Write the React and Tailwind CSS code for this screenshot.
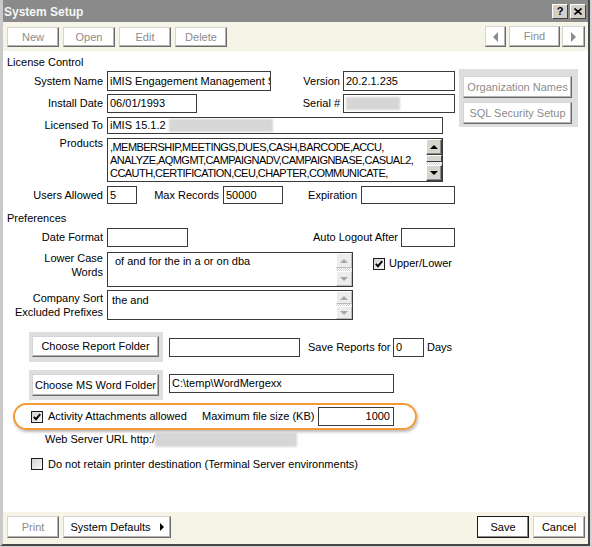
import React from "react";

function Btn({ className = "", disabled = false, def = false, children }) {
  const border = def
    ? "border border-[#1a1a1a] shadow-[inset_-1px_-1px_0_#8a8a8a]"
    : "border border-t-[#d4d4d4] border-l-[#d4d4d4] border-r-[#6a6a6a] border-b-[#6a6a6a] shadow-[inset_-1px_-1px_0_#b4b4b4]";
  const color = disabled ? "text-[#8c8c8c]" : "text-black";
  return (
    <div className={`shrink-0 flex items-center justify-center bg-white whitespace-nowrap ${border} ${color} ${className}`}>
      {children}
    </div>
  );
}

function Label({ children, className = "" }) {
  return <div className={`w-[100px] mr-[4px] shrink-0 text-right whitespace-nowrap ${className}`}>{children}</div>;
}

function Field({ className = "", children }) {
  return (
    <div className={`shrink-0 flex items-center border border-[#3a3a3a] bg-white overflow-hidden whitespace-nowrap pl-[2px] ${className}`}>
      {children}
    </div>
  );
}

function Blur({ className = "" }) {
  return <div className={`bg-[#d6d6d6] blur-[1px] shrink-0 ${className}`} />;
}

function ScrollBtn({ up, disabled, className = "" }) {
  const box = disabled
    ? "bg-[#ececec] border border-t-white border-l-white border-r-[#bcbcbc] border-b-[#bcbcbc]"
    : "bg-[#d8d5ce] border border-t-white border-l-white border-r-[#404040] border-b-[#404040] shadow-[inset_-1px_-1px_0_#8c8c8c]";
  const arrow = up
    ? disabled
      ? "border-l-[4px] border-r-[4px] border-b-[4px] border-l-transparent border-r-transparent border-b-[#a8a8a8]"
      : "border-l-[4px] border-r-[4px] border-b-[4px] border-l-transparent border-r-transparent border-b-black"
    : disabled
      ? "border-l-[4px] border-r-[4px] border-t-[4px] border-l-transparent border-r-transparent border-t-[#a8a8a8]"
      : "border-l-[4px] border-r-[4px] border-t-[4px] border-l-transparent border-r-transparent border-t-black";
  return (
    <div className={`shrink-0 flex items-center justify-center ${box} ${className}`}>
      <div className={`w-0 h-0 ${arrow}`} />
    </div>
  );
}

function Checker({ className = "" }) {
  return (
    <div className={`flex-1 bg-[repeating-conic-gradient(#cfcfcf_0_25%,#ffffff_0_50%)] bg-[length:2px_2px] ${className}`} />
  );
}

function Check({ checked }) {
  return (
    <div className="shrink-0 w-[12px] h-[12px] border border-[#1c1c1c] bg-gradient-to-br from-[#d2d2d2] to-[#f8f8f8] flex items-center justify-center">
      {checked && (
        <svg width="8" height="8" viewBox="0 0 8 8">
          <path d="M0.8 3.8 L3 6.2 L7.2 1.2" stroke="#000" strokeWidth="1.9" fill="none" />
        </svg>
      )}
    </div>
  );
}

export default function App() {
  return (
    <div className="w-[592px] h-[547px] bg-[#d2d2d2] overflow-hidden font-['Liberation_Sans',Arial,sans-serif] text-[11px] leading-[13px] text-black">
      <div className="w-[590px] h-[546px] border-l-[3px] border-l-[#c9c9c9] border-r-2 border-r-[#474747] border-b-2 border-b-[#474747] flex flex-col bg-white">
        {/* Title bar */}
        <div className="h-[22px] shrink-0 bg-[#8a8a8a] flex items-center pl-[1px] pr-[2px]">
          <div className="font-bold text-[12px] leading-[14px] text-[#f6f6f6] pt-[1px]">System Setup</div>
          <div className="ml-auto flex gap-[2px]">
            <div className="w-[16px] h-[15px] bg-[#d4d0c8] border border-t-white border-l-white border-r-[#404040] border-b-[#404040] flex items-center justify-center font-bold text-[11px] leading-[11px]">?</div>
            <div className="w-[16px] h-[15px] bg-[#d4d0c8] border border-t-white border-l-white border-r-[#404040] border-b-[#404040] flex items-center justify-center">
              <svg width="8" height="7" viewBox="0 0 8 7">
                <path d="M0.5 0.5 L7.5 6.5 M7.5 0.5 L0.5 6.5" stroke="#000" strokeWidth="1.6" />
              </svg>
            </div>
          </div>
        </div>

        {/* Toolbar */}
        <div className="h-[29px] shrink-0 bg-[#f6f3e7] flex items-start pt-[5px] pl-[4px] pr-[3px]">
          <div className="flex gap-[4px]">
            <Btn disabled className="w-[52px] h-[20px]">New</Btn>
            <Btn disabled className="w-[52px] h-[20px]">Open</Btn>
            <Btn disabled className="w-[52px] h-[20px]">Edit</Btn>
            <Btn disabled className="w-[52px] h-[20px]">Delete</Btn>
          </div>
          <div className="ml-auto flex">
            <Btn disabled className="w-[21px] h-[21px] -mt-[1px]">
              <div className="w-0 h-0 border-t-[5px] border-b-[5px] border-r-[5px] border-t-transparent border-b-transparent border-r-[#8c8c8c]" />
            </Btn>
            <Btn disabled className="ml-[3px] w-[51px] h-[21px] -mt-[1px]">Find</Btn>
            <Btn disabled className="ml-[2px] w-[23px] h-[21px] -mt-[1px]">
              <div className="w-0 h-0 border-t-[5px] border-b-[5px] border-l-[5px] border-t-transparent border-b-transparent border-l-[#8c8c8c]" />
            </Btn>
          </div>
        </div>

        {/* Body */}
        <div className="flex-1 flex flex-col">
          <div className="mt-[5px] ml-[4px] h-[13px]">License Control</div>

          <div className="flex">
            <div className="flex flex-col pt-[2px]">
              <div className="flex items-center h-[20px]">
                <Label>System Name</Label>
                <Field className="w-[164px] h-[20px]">iMIS Engagement Management System</Field>
                <div className="w-[69px] text-right shrink-0">Version</div>
                <Field className="ml-[3px] w-[112px] h-[20px]">20.2.1.235</Field>
              </div>
              <div className="flex items-center h-[19px] mt-[3px]">
                <Label>Install Date</Label>
                <Field className="w-[90px] h-[19px]">06/01/1993</Field>
                <div className="w-[143px] text-right shrink-0">Serial #</div>
                <Field className="ml-[3px] w-[112px] h-[19px]">
                  <Blur className="w-[54px] h-[13px]" />
                </Field>
              </div>
              <div className="flex items-center h-[17px] mt-[4px]">
                <Label>Licensed To</Label>
                <Field className="w-[336px] h-[17px]">
                  <span>iMIS 15.1.2</span>
                  <Blur className="ml-[3px] w-[104px] h-[13px]" />
                </Field>
              </div>
              <div className="flex items-start h-[44px] mt-[4px]">
                <Label className="-mt-[1px]">Products</Label>
                <div className="shrink-0 w-[336px] h-[44px] border border-[#3a3a3a] bg-white flex">
                  <div className="flex-1 overflow-hidden pl-[2px] pt-[2px] whitespace-nowrap tracking-[-0.55px]">
                    <div>,MEMBERSHIP,MEETINGS,DUES,CASH,BARCODE,ACCU,</div>
                    <div>ANALYZE,AQMGMT,CAMPAIGNADV,CAMPAIGNBASE,CASUAL2,</div>
                    <div>CCAUTH,CERTIFICATION,CEU,CHAPTER,COMMUNICATE,</div>
                  </div>
                  <div className="w-[16px] flex flex-col">
                    <ScrollBtn up className="h-[16px]" />
                    <div className="shrink-0 h-[7px] bg-[#d8d5ce] border border-t-white border-l-white border-r-[#404040] border-b-[#404040]" />
                    <Checker />
                    <ScrollBtn className="h-[16px]" />
                  </div>
                </div>
              </div>
              <div className="flex items-center h-[18px] mt-[4px]">
                <Label>Users Allowed</Label>
                <Field className="w-[30px] h-[18px]">5</Field>
                <div className="w-[82px] text-right shrink-0">Max Records</div>
                <Field className="ml-[4px] w-[60px] h-[18px]">50000</Field>
                <div className="w-[74px] text-right shrink-0">Expiration</div>
                <Field className="ml-[4px] w-[94px] h-[18px]"></Field>
              </div>
            </div>

            <div className="ml-[4px] w-[119px] h-[58px] bg-[#dedede] pt-[7px] pl-[4px] flex flex-col gap-[4px]">
              <Btn disabled className="w-[109px] h-[22px]">Organization Names</Btn>
              <Btn disabled className="w-[109px] h-[22px]">SQL Security Setup</Btn>
            </div>
          </div>

          <div className="mt-[8px] ml-[4px] h-[13px]">Preferences</div>

          <div className="flex items-center h-[19px] mt-[3px]">
            <Label>Date Format</Label>
            <Field className="w-[81px] h-[19px]"></Field>
            <div className="w-[210px] text-right shrink-0">Auto Logout After</div>
            <Field className="ml-[3px] w-[54px] h-[19px]"></Field>
          </div>

          <div className="flex items-start h-[35px] mt-[5px]">
            <Label className="pt-[0px] leading-[13.5px]">Lower Case<br />Words</Label>
            <div className="shrink-0 w-[246px] h-[35px] border border-[#3a3a3a] bg-white flex">
              <div className="flex-1 overflow-hidden pl-[7px] pt-[2px] whitespace-nowrap">of and for the in a or on dba</div>
              <div className="w-[16px] flex flex-col">
                <ScrollBtn up disabled className="h-[15px]" />
                <Checker />
                <ScrollBtn disabled className="h-[15px]" />
              </div>
            </div>
            <div className="ml-[20px] mt-[5px] flex items-center">
              <Check checked />
              <span className="ml-[4px]">Upper/Lower</span>
            </div>
          </div>

          <div className="flex items-start h-[30px] mt-[3px]">
            <Label className="pt-[1px] leading-[14px]">Company Sort<br />Excluded Prefixes</Label>
            <div className="shrink-0 w-[246px] h-[30px] border border-[#3a3a3a] bg-white flex">
              <div className="flex-1 overflow-hidden pl-[4px] pt-[3px] whitespace-nowrap">the and</div>
              <div className="w-[16px] flex flex-col">
                <ScrollBtn up disabled className="h-[13px]" />
                <Checker />
                <ScrollBtn disabled className="h-[13px]" />
              </div>
            </div>
          </div>

          <div className="flex items-center h-[30px] mt-[12px] ml-[26px]">
            <div className="shrink-0 w-[134px] h-[30px] bg-[#dedede] pl-[3px] pt-[4px]">
              <Btn className="w-[127px] h-[21px]">Choose Report Folder</Btn>
            </div>
            <Field className="ml-[6px] w-[131px] h-[19px]"></Field>
            <div className="ml-[8px] w-[85px] shrink-0 whitespace-nowrap">Save Reports for</div>
            <Field className="w-[31px] h-[19px]">0</Field>
            <div className="ml-[3px]">Days</div>
          </div>

          <div className="flex items-start h-[30px] mt-[8px] ml-[26px]">
            <div className="shrink-0 w-[134px] h-[30px] bg-[#dedede] pl-[3px] pt-[4px]">
              <Btn className="w-[127px] h-[22px]">Choose MS Word Folder</Btn>
            </div>
            <Field className="ml-[6px] mt-[4px] w-[225px] h-[19px]">C:\temp\WordMergexx</Field>
          </div>

          <div className="mt-[3px] ml-[10px] w-[404px] h-[27px] rounded-full border-2 border-[#f39a35] shadow-[1px_2px_3px_rgba(0,0,0,0.28)] flex items-center pl-[16px]">
            <Check checked />
            <div className="ml-[5px] w-[154px] shrink-0 whitespace-nowrap">Activity Attachments allowed</div>
            <div className="w-[116px] shrink-0 whitespace-nowrap">Maximum file size (KB)</div>
            <Field className="w-[76px] h-[19px] justify-end pr-[3px]">1000</Field>
          </div>

          <div className="mt-[2px] ml-[42px] h-[15px] flex items-center">
            <div className="w-[110px] shrink-0 whitespace-nowrap">Web Server URL http:/</div>
            <Blur className="w-[142px] h-[15px]" />
          </div>

          <div className="mt-[10px] ml-[28px] h-[14px] flex items-center">
            <Check />
            <div className="ml-[5px] whitespace-nowrap">Do not retain printer destination (Terminal Server environments)</div>
          </div>
        </div>

        {/* Bottom bar */}
        <div className="h-[32px] shrink-0 bg-[#f6f3e7] flex items-start pt-[4px] pl-[4px] pr-[3px]">
          <Btn disabled className="w-[52px] h-[22px]">Print</Btn>
          <Btn className="ml-[4px] w-[108px] h-[22px]">
            <span>System Defaults</span>
            <div className="ml-[9px] w-0 h-0 border-t-[4px] border-b-[4px] border-l-[4px] border-t-transparent border-b-transparent border-l-black" />
          </Btn>
          <div className="ml-auto flex gap-[4px]">
            <Btn def className="w-[52px] h-[22px]">Save</Btn>
            <Btn className="w-[52px] h-[22px]">Cancel</Btn>
          </div>
        </div>
      </div>
    </div>
  );
}
